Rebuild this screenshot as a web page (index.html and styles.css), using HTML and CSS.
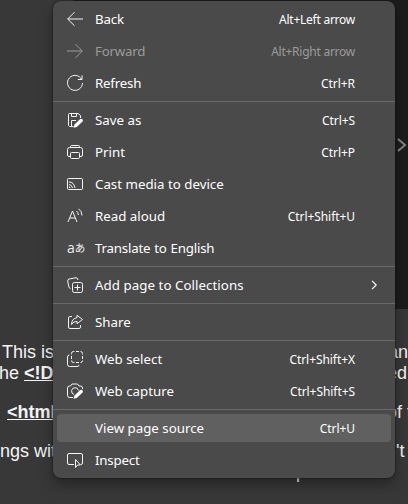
FILE: index.html
```html
<!DOCTYPE html>
<html lang="en">
<head>
<meta charset="utf-8">
<title>Context menu</title>
<link rel="stylesheet" href="styles.css">
</head>
<body>
<main class="page">
  <div class="viewer"><svg class="next" viewBox="0 0 10 14"><path d="M1 1l7 6-7 6"/></svg></div>
  <div class="article">
    <p class="line first"><span>This is</span><span class="end an">an</span></p>
    <p class="line second"><span>he <b>&lt;!DOC</b></span><span class="end ed">ed</span></p>
    <p class="line third"><b>&lt;html&gt;</b><span class="end of">of t</span></p>
    <p class="line fourth"><span>ngs with</span><span class="end apos">'t</span></p>
    <p class="line fifth">p</p>
  </div>
</main>
<nav class="menu">
  <div class="item"><svg viewBox="0 0 16 16"><path d="M16 8H.7M7.500 1.200L.7 8l6.800 6.800"/></svg><span class="label tight">Back</span><span class="key narrow">Alt+Left arrow</span></div>
  <div class="item disabled"><svg viewBox="0 0 16 16"><path d="M0 8h15.300M8.500 1.200L15.300 8l-6.800 6.800"/></svg><span class="label tight">Forward</span><span class="key narrow">Alt+Right arrow</span></div>
  <div class="item"><svg viewBox="0 0 16 16"><path d="M14.700 4.500A7.500 7.500 0 1 0 15.500 8M15 .3v4.200h-4.200"/></svg><span class="label tight">Refresh</span><span class="key">Ctrl+R</span></div>
  <hr>
  <div class="item"><svg viewBox="0 0 16 16"><path d="M6.500 14.500h-4l-1-1v-11Q1.500 1.500 2.500 1.500H11l2.500 2V6M4.500 1.500v3h5v-3M4.500 14V8.500H9"/><path class="solid" d="M6.500 15.800l1-3.300 5.700-5.500q1.200-.8 2.200.2t.1 2.200l-5.700 5.500z"/></svg><span class="label">Save as</span><span class="key">Ctrl+S</span></div>
  <div class="item"><svg viewBox="0 0 16 16"><path d="M3.500 12.500H2Q.5 12.500.5 11V5.500Q.5 3.500 2.500 3.500h11q2 0 2 2V11q0 1.500-1.500 1.500h-1.500M3.500 3.500V2.500Q3.500 1.500 4.500 1.500h7q1 0 1 1v1"/><rect x="3.500" y="8.500" width="9" height="6" rx="1"/></svg><span class="label">Print</span><span class="key">Ctrl+P</span></div>
  <div class="item"><svg viewBox="0 0 16 16"><rect x=".5" y="2.500" width="15" height="11" rx="1"/><path d="M2 6q5 0 6 6M2 8.500q3 .3 3.500 3.500"/><path class="solid" d="M2 10.500q1.500 0 1.500 1.500H2z"/></svg><span class="label">Cast media to device</span></div>
  <div class="item"><svg viewBox="0 0 16 16"><path d="M1 14L5.500 3 10 14M2.700 10h5.600M9.500 3q1.800 1.300 1.800 4M11.500.8Q15 3 15 7.500"/></svg><span class="label">Read aloud</span><span class="key">Ctrl+Shift+U</span></div>
  <div class="item"><span class="glyph"><span>a</span><span class="kana">あ</span></span><span class="label tight">Translate to English</span></div>
  <hr>
  <div class="item"><svg viewBox="0 0 16 16"><path d="M3.500 11.500L2 10.500.7 4Q.5 2.500 2 2L9 .7q1.500-.2 2 2.300"/><rect x="5.500" y="5.500" width="10" height="10" rx="1.800"/><path d="M10.500 7.500v6M7.500 10.500h6"/></svg><span class="label wide">Add page to Collections</span><svg class="chevron" viewBox="0 0 6 10"><path d="M1 .8L5.200 5 1 9.200"/></svg></div>
  <hr>
  <div class="item"><svg viewBox="0 0 16 16"><path d="M5 2.500H3Q1.500 2.500 1.500 4v9q0 1.500 1.500 1.500h9q1.500 0 1.500-1.500v-2"/><path d="M10 1.300L15.500 5.500 10 9.700V7.500Q6.500 7 4.500 10.500 4.700 4.500 10 3.700z"/></svg><span class="label">Share</span></div>
  <hr>
  <div class="item"><svg viewBox="0 0 16 16"><path d="M2.500 4Q.5 4 .5 6v7.500q0 2 2 2H10q2 0 2-1.500"/><path d="M4.500 3.500v-1q0-2 2-2h1M9 .5h3M13.500.5q2 0 2 2v1M15.500 5v3M15.500 9.500q0 2-2 2M12 11.500H9M7.500 11.500h-1q-2 0-2-2M4.500 8V5"/></svg><span class="label">Web select</span><span class="key">Ctrl+Shift+X</span></div>
  <div class="item"><svg viewBox="0 0 16 16"><path d="M6 14.500H2.500Q.5 14.500.5 12.500V5Q.5 3 2.500 3h1L5 1h5.500L12 3h1.500q2 0 2 2v1M7 11.500A3.500 3.500 0 1 1 11.500 7.500"/><path class="solid" d="M6.500 15.800l1-3.300 5.700-5.500q1.200-.8 2.200.2t.1 2.200l-5.700 5.500z"/></svg><span class="label">Web capture</span><span class="key">Ctrl+Shift+S</span></div>
  <hr>
  <div class="item active"><span class="blank"></span><span class="label">View page source</span><span class="key">Ctrl+U</span></div>
  <div class="item"><svg viewBox="0 0 16 16"><path d="M7 12.500H2Q.5 12.500.5 11V3Q.5 1.500 2 1.500h12q1.500 0 1.500 1.500v8q0 1.500-1.500 1.500M8.500 7.500v8l2-2.500h3z"/></svg><span class="label tight">Inspect</span></div>
</nav>
</body>
</html>
```
FILE: styles.css
```css
* { box-sizing: border-box; }
body { margin: 0; width: 408px; height: 504px; overflow: hidden; background: #383838; position: relative; }
.page { height: 504px; overflow: hidden; }
.viewer { height: 309px; margin-left: 74px; background: #1c1c1c; display: flex; justify-content: flex-end; padding: 138px 1px 0 0; }
.next { width: 10px; height: 14px; fill: none; stroke: #858585; stroke-width: 2; }
.article { padding-top: 33px; font: 18px/21px "Liberation Sans", Arial, sans-serif; color: #f4f4f4; }
.line { margin: 0; height: 21px; display: flex; justify-content: space-between; white-space: pre; }
.line b { text-decoration: underline; }
.end.an { width: 20px; }
.end.ed { width: 21px; }
.end.of { width: 21px; }
.end.apos { width: 12px; }
.first { padding-left: 2px; }
.second > :first-child { margin-left: -1px; }
.third, .fourth { margin-top: 18px; }
.third { padding-left: 7px; }
.fifth { padding-left: 296px; }

.menu { position: absolute; left: 53px; top: 1px; width: 342px; height: 477px; padding: 2px 0; display: flex; flex-direction: column; border-radius: 8px; background: #4a4a4a; box-shadow: 0 0 2px #111, 0 7px 14px rgba(0,0,0,.34); color: #fff; font-family: "Noto Sans", "Open Sans", sans-serif; }
.item { flex: none; height: 32px; padding: 0 40px 0 14px; display: flex; align-items: center; white-space: nowrap; }
.item svg, .blank, .glyph { flex: none; width: 16px; height: 16px; margin-right: 12px; }
.item svg { fill: none; stroke: #f5f5f5; stroke-width: 1; stroke-linejoin: round; overflow: visible; }
.item .solid { fill: #fff; stroke: none; }
.label { font-size: 13.3px; line-height: 20px; }
.tight { letter-spacing: -.2px; word-spacing: .6px; }
.wide { letter-spacing: .05px; }
.key { margin-left: auto; font-size: 12px; line-height: 20px; padding-top: 1px; letter-spacing: -.06px; }
.key.narrow { letter-spacing: -.25px; }
.disabled { color: #9b9b9b; }
.item.disabled svg { stroke: #9b9b9b; }
hr { flex: none; width: 100%; height: 1px; margin: 2px 0; border: 0; background: #6a6a6a; }
.active { height: 28px; margin: 2px 4px; padding: 0 36px 0 10px; border-radius: 4px; background: #606060; }
.glyph { display: flex; align-items: center; font: 14px/16px "Open Sans", sans-serif; color: #eee; }
.kana { font-family: "Noto Sans CJK JP", sans-serif; font-size: 10.5px; }
.item .chevron { width: 6px; height: 10px; margin: 0 -22px 0 auto; stroke-width: 1.2; }
```
